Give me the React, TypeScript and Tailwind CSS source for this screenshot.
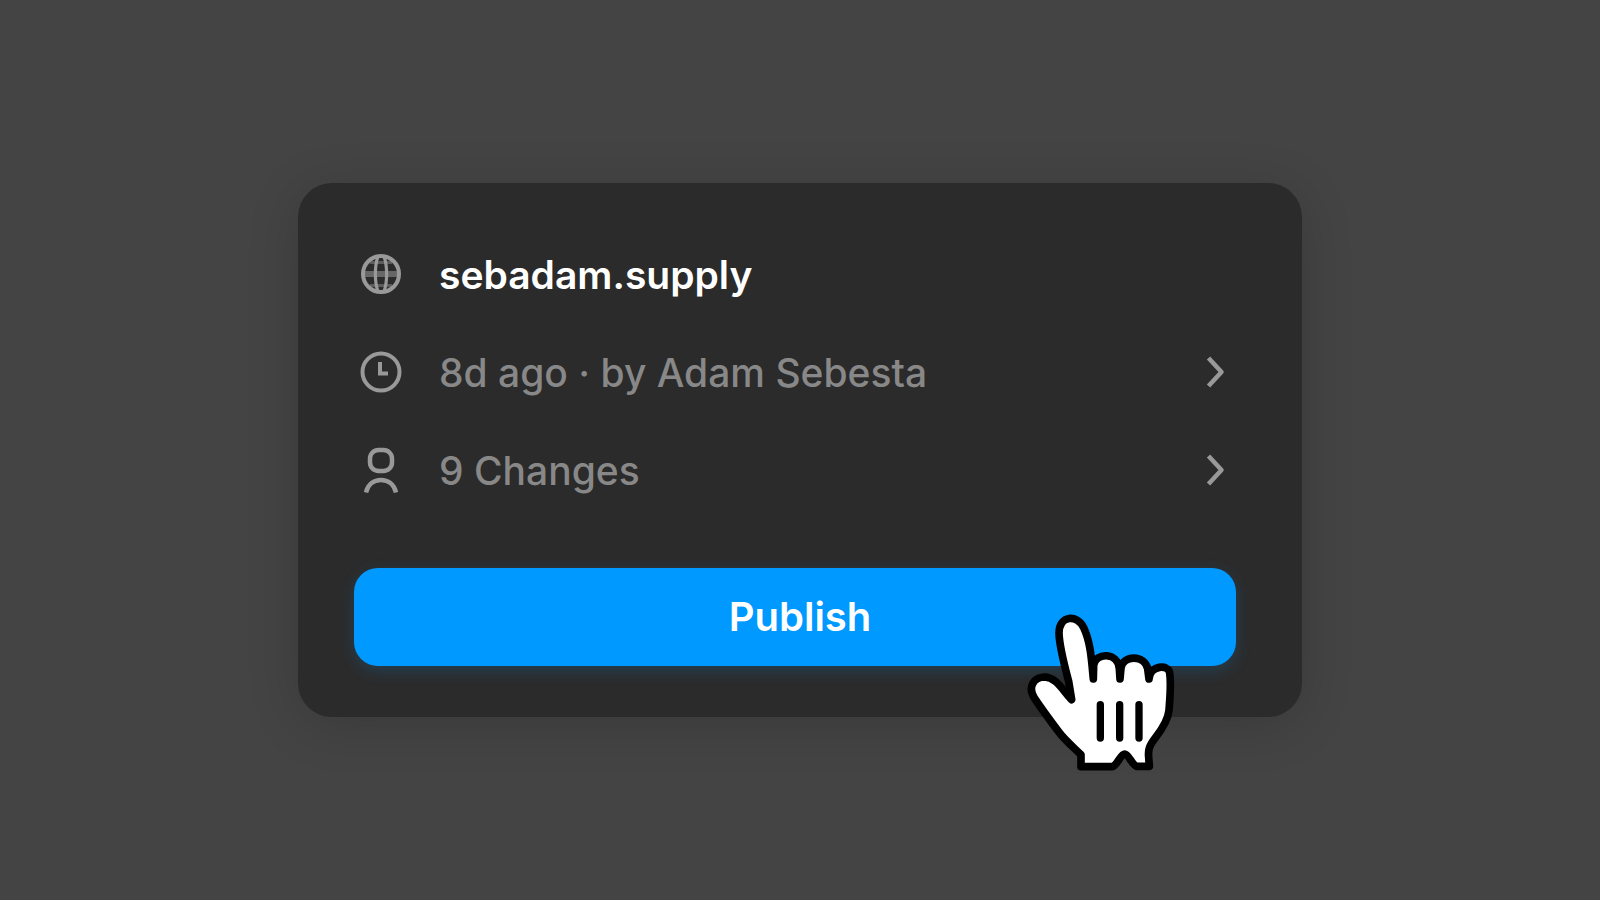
import type { ReactNode } from 'react';

const GlobeIcon = () => (
  <svg viewBox="0 0 48 48" fill="none" stroke="currentColor" className="size-12" aria-hidden="true">
    <circle cx="24" cy="24" r="18" strokeWidth="4" />
    <path d="M21 6.5c-3.5 9-3.5 26 0 35M27 6.5c3.5 9 3.5 26 0 35" strokeWidth="3.2" />
    <path d="M6 24h36" strokeWidth="6" opacity="0.55" />
    <path d="M13 12.5h22M13 35.5h22" strokeWidth="3" opacity="0.45" />
  </svg>
);

const ClockIcon = () => (
  <svg viewBox="0 0 48 48" fill="none" stroke="currentColor" className="size-12" aria-hidden="true">
    <circle cx="24" cy="24" r="18.5" strokeWidth="4" />
    <path d="M23 14v11.5h8" strokeWidth="4" />
  </svg>
);

const PersonIcon = () => (
  <svg viewBox="0 0 48 48" fill="none" stroke="currentColor" className="size-12" aria-hidden="true">
    <rect x="13" y="4" width="22" height="21" rx="8.5" strokeWidth="4.5" />
    <path d="M9 46.5C11 38 17 34 24 34s13 4 15 12.5" strokeWidth="4.5" />
  </svg>
);

const ChevronIcon = () => (
  <svg viewBox="0 0 20 32" fill="none" stroke="currentColor" className="h-8 w-5" aria-hidden="true">
    <path d="M2.5 2 15.5 16 2.5 30" strokeWidth="4.5" strokeLinejoin="round" />
  </svg>
);

const HandCursor = () => (
  <svg
    viewBox="54 44 438 468"
    className="pointer-events-none absolute right-[128px] -bottom-[54px] h-[156px] w-[146px] overflow-visible"
    aria-hidden="true"
  >
    <path
      d="M185 298L176 243C166 205 148 140 147 98C148 43 202 42 221 82C241 125 244 170 250 236L251 195C256 155 324 155 328 205L330 236L333 203C340 163 404 163 413 205L417 236C420 194 476 191 479 218C484 250 480 290 477 330C474 362 455 388 437 411C417 436 414 450 416 470L418 498L380 498C365 493 356 461 344 461C332 461 324 491 308 499L213 499L213 463C195 445 166 421 148 397C120 360 93 323 73 293C52 259 72 231 103 230C140 230 160 274 185 298Z"
      fill="#fff"
      stroke="#000"
      strokeWidth="23"
      strokeLinejoin="round"
    />
    <path d="M271 313v100M329 313v100M387 313v100" stroke="#000" strokeWidth="22" strokeLinecap="round" />
  </svg>
);

type RowProps = {
  icon: ReactNode;
  label: string;
};

const LinkRow = ({ icon, label }: RowProps) => (
  <button type="button" className="flex h-[98px] w-full items-center gap-[34px] pr-[10px] pl-[3px] text-left text-[#888]">
    <span className="text-[#999]">{icon}</span>
    <span className="flex-1 font-medium">{label}</span>
    <span className="text-[#999]">
      <ChevronIcon />
    </span>
  </button>
);

export default function App() {
  return (
    <main className="flex min-h-screen items-center justify-center bg-[#444] font-['Inter',sans-serif] text-[39px] leading-none">
      <section className="relative w-full max-w-[1004px] rounded-[34px] bg-[#2b2b2b] pt-[42px] pr-[66px] pb-[51px] pl-[56px] shadow-[0_8px_52px_rgba(0,0,0,0.16)]">
        <div className="flex h-[98px] items-center gap-[34px] pl-[3px]">
          <span className="text-[#999]">
            <GlobeIcon />
          </span>
          <h1 className="font-semibold text-white">sebadam.supply</h1>
        </div>
        <LinkRow icon={<ClockIcon />} label="8d ago · by Adam Sebesta" />
        <LinkRow icon={<PersonIcon />} label="9 Changes" />

        <button
          type="button"
          className="mt-[49px] h-[98px] w-full rounded-3xl bg-[#0099ff] pl-[10px] text-[40px] font-semibold text-white shadow-[0_5px_16px_rgba(0,153,255,0.18)]"
        >
          Publish
        </button>

        <HandCursor />
      </section>
    </main>
  );
}
